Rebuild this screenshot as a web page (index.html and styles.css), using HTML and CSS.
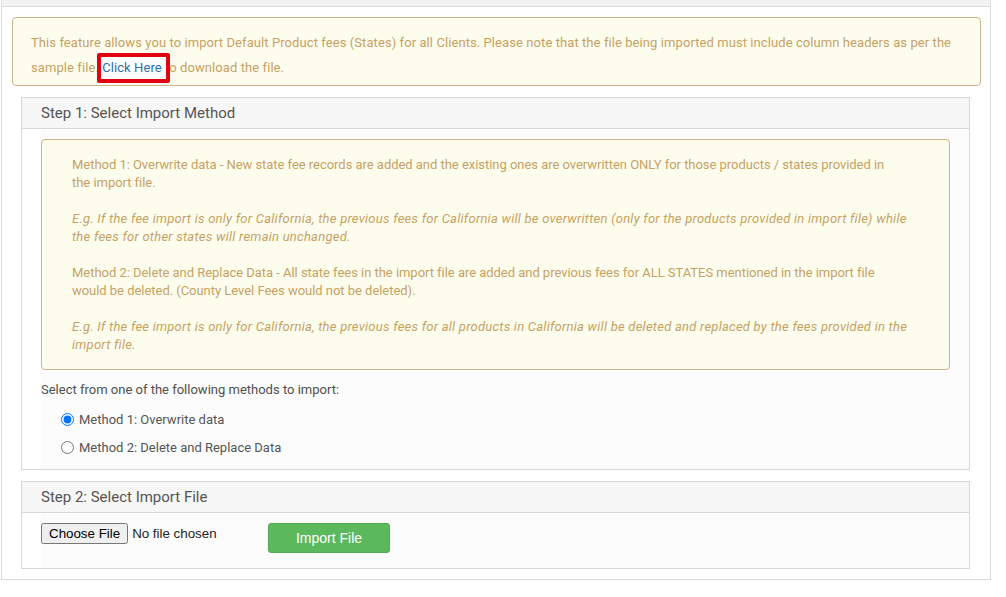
FILE: index.html
```html
<!DOCTYPE html>
<html>
  <head>
    <meta charset="utf-8" />
    <link rel="stylesheet" href="styles.css">
  </head>
  <body>
    <div class="page">
      <div class="page-top"></div>

      <div class="notice">
        This feature allows you to import Default Product fees (States) for all Clients. Please note that the file being imported must include column headers as per the sample file. <span class="mark"><a class="link" href="#">Click Here</a></span> to download the file.
      </div>

      <div class="panel">
        <div class="panel-head">Step 1: Select Import Method</div>
        <div class="panel-body">
          <div class="form-area">
            <div class="info">
              Method 1: Overwrite data - New state fee records are added and the existing ones are overwritten ONLY for those products / states provided in<br>the import file.<br><br>
              <i>E.g. If the fee import is only for California, the previous fees for California will be overwritten (only for the products provided in import file) while the fees for other states will remain unchanged.</i><br><br>
              Method 2: Delete and Replace Data - All state fees in the import file are added and previous fees for ALL STATES mentioned in the import file would be deleted. (County Level Fees would not be deleted).<br><br>
              <i>E.g. If the fee import is only for California, the previous fees for all products in California will be deleted and replaced by the fees provided in the import file.</i>
            </div>

            <div class="select-label">Select from one of the following methods to import:</div>
            <label class="option"><input type="radio" name="method" checked> Method 1: Overwrite data</label>
            <label class="option"><input type="radio" name="method"> Method 2: Delete and Replace Data</label>
          </div>
        </div>
      </div>

      <div class="panel panel-last">
        <div class="panel-head">Step 2: Select Import File</div>
        <div class="panel-body">
          <div class="form-area file-row">
            <input class="file-input" type="file">
            <button class="btn-import" type="button">Import File</button>
          </div>
        </div>
      </div>
    </div>
  </body>
</html>
```

FILE: styles.css
```css
/* page shell */
body {
  margin: 0;
  background: #ffffff;
  font-family: Roboto, "Liberation Sans", sans-serif;
  font-size: 13px;
  color: #555555;
}

.page {
  box-sizing: border-box;
  width: 990px;
  margin-left: 1px;
  border: 1px solid #d9dcdc;
  border-top: 0;
  padding-bottom: 10px;
}

.page-top {
  height: 6px;
  background: #f3f3f3;
  border-bottom: 1px solid #d9dcdc;
}

/* yellow notice on top */
.notice {
  margin: 10px 9px 0 10px;
  padding: 12px 18px 5px 18px;
  background: #fdfdee;
  border: 1px solid #cdb48b;
  border-radius: 4px;
  color: #c7a164;
  line-height: 25px;
  letter-spacing: 0.08px;
}

.mark {
  position: relative;
}

/* red highlight box drawn over the link */
.mark::before {
  content: "";
  position: absolute;
  left: -5px;
  right: -8px;
  top: -7px;
  bottom: -8px;
  background: #ffffff;
  border: 4px solid #e3000f;
  border-radius: 2px;
}

.link {
  position: relative;
  color: #2a6fae;
  text-decoration: none;
}

/* panels */
.panel {
  margin: 11px 20px 0 19px;
  border: 1px solid #d6d8d8;
}

.panel-last {
  margin-top: 11px;
}

.panel-head {
  height: 30px;
  line-height: 30px;
  padding-left: 19px;
  background: #f7f7f7;
  border-bottom: 1px solid #d6d8d8;
  font-size: 15px;
  color: #555555;
}

.panel-body {
  padding-left: 19px;
}

.form-area {
  background: #fcfcfc;
  padding: 10px 0 8px;
}

.info {
  margin-right: 19px;
  padding: 16px 38px 15px 30px;
  background: #fdfdee;
  border: 1px solid #cdb48b;
  border-radius: 4px;
  color: #c7a164;
  line-height: 18px;
  letter-spacing: -0.035px;
}

.info i {
  letter-spacing: 0.24px;
}

.select-label {
  margin: 11px 0 6px;
  line-height: 18px;
  color: #4f4f4f;
}

.option {
  display: flex;
  align-items: center;
  height: 28px;
}

.option input {
  margin: 0 5px 0 20px;
}

/* step 2 row */
.file-row {
  display: flex;
  align-items: flex-start;
  padding: 10px 0 15px;
}

.file-input {
  width: 227px;
  margin: 0;
  font-family: "Liberation Sans", Arial, sans-serif;
  font-size: 13.33px;
  color: #222222;
}

.btn-import {
  width: 122px;
  height: 30px;
  background: #5cb85c;
  border: 1px solid #4cae4c;
  border-radius: 3px;
  color: #ffffff;
  font-family: "Liberation Sans", Arial, sans-serif;
  font-size: 14px;
}
```
